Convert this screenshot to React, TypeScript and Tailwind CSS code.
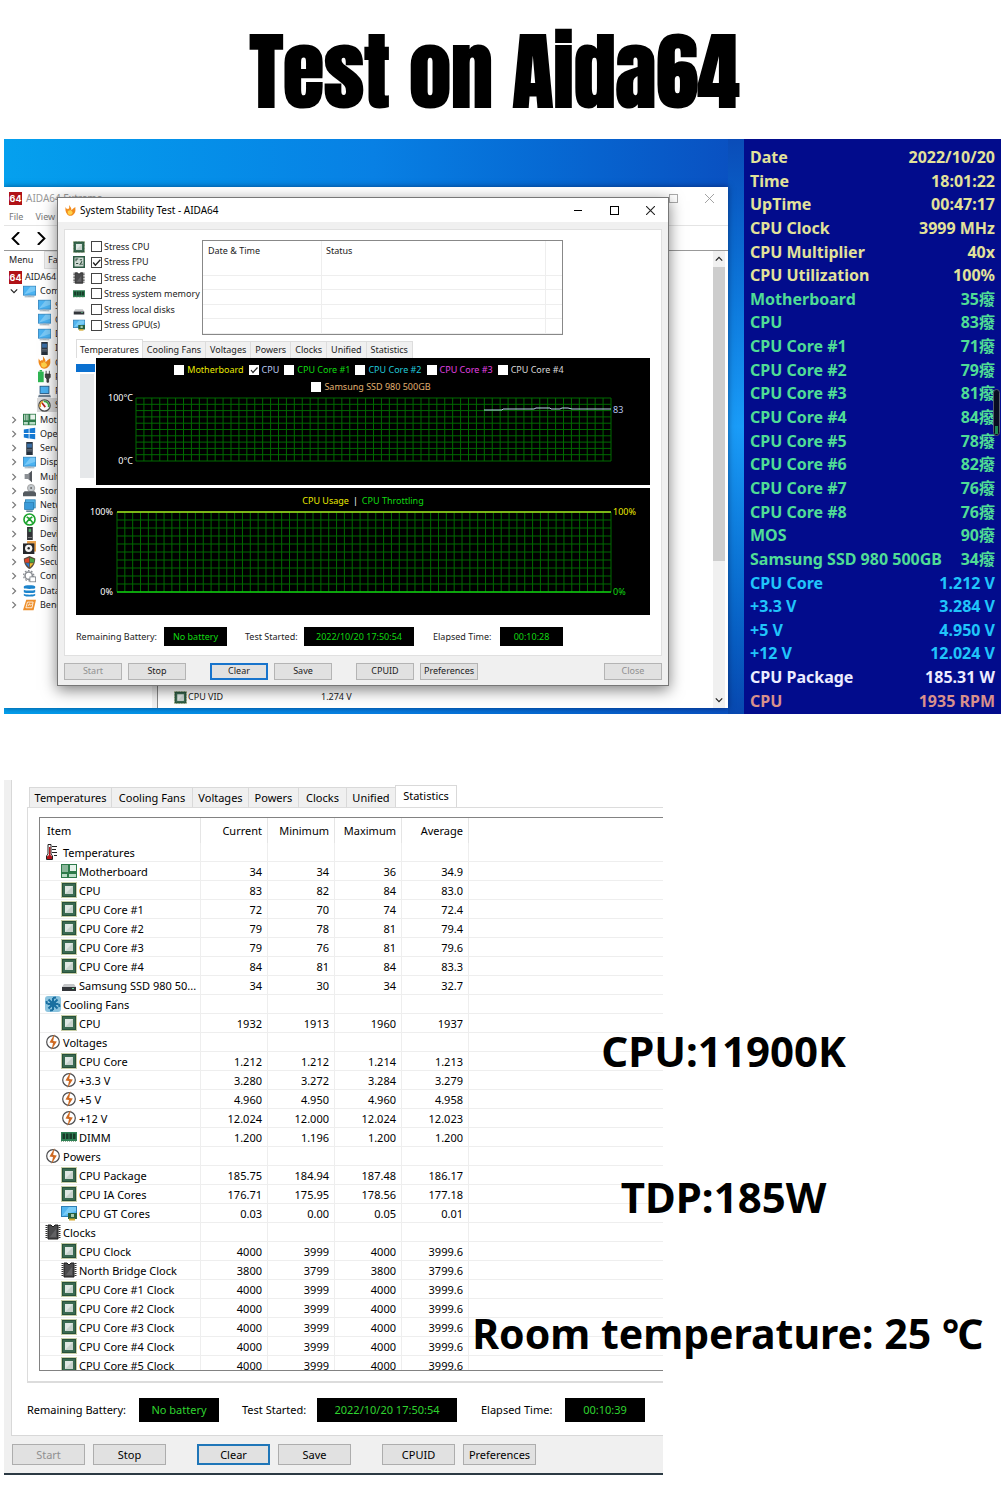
import React from "react";

type IconName =
  | "chip" | "fpu" | "ic" | "ram" | "disk" | "gpu" | "monitor" | "server" | "flame" | "power"
  | "laptop" | "gauge" | "board" | "windows" | "speaker" | "storage" | "network"
  | "directx" | "device" | "software" | "shield" | "config" | "database" | "bench" | "fan"
  | "bolt" | "thermo";

const drawings: Record<IconName, React.ReactNode> = {
  chip: (
    <>
      <rect x="0.5" y="0.5" width="15" height="15" fill="none" stroke="#8a9a4a" strokeWidth="1" strokeDasharray="1 1" />
      <rect x="1" y="1" width="14" height="14" fill="#3a6a50" />
      <rect x="1.500" y="1.500" width="13" height="13" fill="none" stroke="#27503b" />
      <rect x="4" y="4" width="8" height="8" fill="#dfe7e3" />
      <path d="M4 12L12 4V12Z" fill="#c8d3cd" />
    </>
  ),
  fpu: (
    <>
      <rect x="1" y="1" width="14" height="14" fill="#cfdad3" stroke="#2c5a43" strokeWidth="2" />
      <path d="M4 7V4H7M9 5H12M4 10H7M9 12L12 7M11 11H13" stroke="#2c4a3a" strokeWidth="1.4" fill="none" />
    </>
  ),
  ic: (
    <>
      <path d="M3 1H6L8 3L10 1H13V15H3Z" fill="#4a4a4c" stroke="#1c1c1c" />
      <path d="M1.500 1V15M14.500 1V15" stroke="#333" strokeWidth="2" strokeDasharray="1 1" />
      <path d="M5 13L11 5V13Z" fill="#626264" />
    </>
  ),
  ram: (
    <>
      <rect x="0" y="3" width="16" height="9" fill="#2f8054" />
      <path d="M1.500 4.500H4V10H1.500ZM5 4.500H7.500V10H5ZM8.500 4.500H11V10H8.500ZM12 4.500H14.500V10H12Z" fill="#173b29" />
      <path d="M0 12.500H16" stroke="#9db39e" strokeDasharray="1 1" />
    </>
  ),
  disk: (
    <>
      <path d="M3 7H13L15 10H1Z" fill="#c5c7c9" />
      <rect x="1" y="10" width="14" height="4" fill="#33363a" />
      <rect x="11" y="11" width="2" height="1" fill="#6fdd9a" />
    </>
  ),
  gpu: (
    <>
      <rect x="0.5" y="1.5" width="15" height="10" fill="#52b5ef" stroke="#2e7fb5" />
      <path d="M1 11L8 2H15V6Z" fill="#7accf6" />
      <rect x="7" y="8" width="9" height="6" fill="#27603f" />
      <rect x="10" y="9" width="3" height="3" fill="#a6c9ad" />
      <path d="M8 14.5H14" stroke="#d4a92d" strokeWidth="2" />
    </>
  ),
  monitor: (
    <>
      <rect x="0.5" y="1.5" width="15" height="11" fill="#4bb3f2" stroke="#3183bd" />
      <path d="M1 12L9 2H15V7Z" fill="#79c9f7" />
      <path d="M6 13H10V14H6Z" fill="#a4b2bc" />
      <path d="M2 14.5H14" stroke="#8497a5" />
    </>
  ),
  server: (
    <>
      <rect x="4" y="0" width="8" height="16" fill="#26303c" />
      <rect x="5" y="2" width="6" height="5" fill="#3a6ea5" />
      <path d="M5 9H11M5 11H11" stroke="#77838f" />
    </>
  ),
  flame: (
    <>
      <path d="M1 3C2 6 4 7 4 5C7 7 6 2 6 0C8 3 10 5 9 8L12 5L15 3C15 7 16 10 13 13C10 17 4 16 3 13C1 10 0 7 1 3Z" fill="#f28a1c" />
      <path d="M4 8C6 9 7 8 7 6C9 9 12 9 11 12C9 15 5 15 4 12Z" fill="#ffd24a" />
    </>
  ),
  power: (
    <>
      <rect x="0" y="2" width="7" height="13" fill="#2fb552" />
      <rect x="2" y="0" width="3" height="2" fill="#2fb552" />
      <path d="M10 1V5M14 1V5M9 5H15V9L13 11V15H11V11L9 9Z" stroke="#333" fill="#444" />
    </>
  ),
  laptop: (
    <>
      <rect x="2.5" y="1.5" width="11" height="9" fill="#4bb0f0" stroke="#1e4e78" />
      <path d="M1 12H15L16 15H0Z" fill="#6b7d8e" />
    </>
  ),
  gauge: (
    <>
      <circle cx="8" cy="8" r="7" fill="#fff" stroke="#4b4b4b" strokeWidth="1.5" />
      <path d="M3 10A5.500 5.500 0 0 1 6 3" stroke="#e0a021" strokeWidth="2" fill="none" />
      <path d="M7 3A5.500 5.500 0 0 1 13 10" stroke="#3bab45" strokeWidth="2" fill="none" />
      <path d="M5 5L9 10" stroke="#b32020" strokeWidth="2" />
    </>
  ),
  board: (
    <>
      <rect x="0" y="1" width="16" height="14" fill="#2d7a49" />
      <path d="M2 2V9M4 2V9M6 2V9" stroke="#e6f2ea" />
      <rect x="9" y="2" width="6" height="6" fill="#e6f2ea" />
      <path d="M1 11H6V14H1ZM8 11H15V14H8Z" fill="#b9dbc5" />
    </>
  ),
  windows: <path d="M1 3L7 2V7.500H1ZM8 1.800L15 1V7.500H8ZM1 8.500H7V14L1 13ZM8 8.500H15V15L8 14.200Z" fill="#1579d3" />,
  speaker: (
    <>
      <path d="M2 5H6L11 1V15L6 11H2Z" fill="#8b8f94" />
      <path d="M8 4L11 1V15L8 12Z" fill="#50545a" />
    </>
  ),
  storage: (
    <>
      <circle cx="10" cy="5" r="4.500" fill="#c3c8cc" stroke="#999" />
      <circle cx="10" cy="5" r="1.200" fill="#666" />
      <path d="M2 9H14L16 11V15H0V11Z" fill="#555b60" />
    </>
  ),
  network: (
    <>
      <rect x="3" y="1" width="12" height="10" fill="#55b8ee" stroke="#2c7cae" />
      <rect x="2" y="4" width="11" height="9" fill="#3a9ad9" stroke="#2c7cae" />
      <path d="M4 15H12" stroke="#6a8496" strokeWidth="2" />
    </>
  ),
  directx: (
    <>
      <circle cx="8" cy="8" r="6.800" fill="#fff" stroke="#1aa32c" strokeWidth="2" />
      <path d="M4 12L8 7L12 12M4.500 5L8 7L11.500 5" stroke="#1aa32c" strokeWidth="2" fill="none" />
    </>
  ),
  device: (
    <>
      <rect x="5" y="0" width="7" height="16" fill="#303236" />
      <rect x="7" y="2" width="3" height="4" fill="#4fa968" />
      <path d="M6 13H11" stroke="#999" />
    </>
  ),
  software: (
    <>
      <path d="M5 0H16V13H5Z" fill="#e8a14c" />
      <rect x="0" y="3" width="14" height="13" fill="#26282b" />
      <circle cx="7" cy="9" r="4.500" fill="#f2f2f2" />
      <circle cx="7" cy="9" r="1.500" fill="#26282b" />
    </>
  ),
  shield: (
    <>
      <path d="M8 0L15 3C15 10 12 14 8 16C4 14 1 10 1 3Z" fill="#5b4a3a" />
      <path d="M7.500 2V8H2.500L2 4Z" fill="#d8452c" />
      <path d="M8.500 2V8H13.500L14 4Z" fill="#46a445" />
      <path d="M7.500 9V14L3 9Z" fill="#2f78cf" />
      <path d="M8.500 9V14L13 9Z" fill="#f0bd2e" />
    </>
  ),
  config: (
    <>
      <circle cx="7" cy="7" r="4.500" fill="#fff" stroke="#8b8f94" strokeWidth="2" />
      <circle cx="7" cy="7" r="6.300" fill="none" stroke="#8b8f94" strokeWidth="1.500" strokeDasharray="2 2" />
      <rect x="8.500" y="8.500" width="7" height="6" fill="#fff" stroke="#7d8288" />
    </>
  ),
  database: (
    <path d="M1 3C1 1 15 1 15 3V5C15 6.500 1 6.500 1 5ZM1 7C4 8.500 12 8.500 15 7V10C12 11.500 4 11.500 1 10ZM1 12C4 13.500 12 13.500 15 12V14C12 16 4 16 1 14Z" fill="#1c84cc" />
  ),
  bench: (
    <>
      <path d="M4 2H16L13 15H0Z" fill="#ee8f2b" />
      <path d="M5.500 5H12.500L11 12H3.500Z" fill="none" stroke="#fff" />
      <path d="M6 10L8 7L9 9L11 7" stroke="#fff" fill="none" />
    </>
  ),
  fan: (
    <>
      <rect x="0" y="0" width="16" height="16" rx="3" fill="#8cc4df" />
      <path d="M8 2V14M2.500 8H13.500M3.500 3.500L12.500 12.500M12.500 3.500L3.500 12.500" stroke="#1a6fa0" strokeWidth="2" />
      <path d="M8 2L11 1.500M14 8L14.500 11M8 14L5 14.500M2 8L1.500 5" stroke="#1a6fa0" strokeWidth="2" />
      <circle cx="8" cy="8" r="3" fill="#1a6fa0" />
    </>
  ),
  bolt: (
    <>
      <circle cx="8" cy="8" r="6.300" fill="#fff" stroke="#4d4d4f" strokeWidth="1.200" />
      <path d="M9.500 0L4.500 8.500L8 9L6.500 16L11.800 7.500L8.200 7Z" fill="#cf6a22" />
    </>
  ),
  thermo: (
    <>
      <path d="M3 0.500H6V10L7.500 12V15.500H1.500V12L3 10Z" fill="#fff" stroke="#222" />
      <path d="M4 3H5.500V11L7 12.500V15H2V12.500L4 11Z" fill="#b3161b" />
      <path d="M7 2.500H12M7 5.500H11M7 8.500H12M9 11.500H12" stroke="#222" />
    </>
  ),
};

function Icon({ name, className }: { name: IconName; className: string }) {
  return (
    <svg viewBox="0 0 16 16" className={className} aria-hidden="true">
      {drawings[name]}
    </svg>
  );
}

function Logo() {
  return (
    <span className="flex h-[13px] w-[13px] shrink-0 items-center justify-center bg-[#b01217] font-['Inter',sans-serif] text-[9px] font-bold leading-none text-white">
      64
    </span>
  );
}

function Check({ checked, dark }: { checked?: boolean; dark?: boolean }) {
  return (
    <span className="relative flex shrink-0">
      <input
        type="checkbox"
        defaultChecked={checked}
        className={
          dark
            ? "peer h-[10px] w-[10px] appearance-none border border-white bg-white"
            : "peer h-[11px] w-[11px] appearance-none border border-[#444] bg-white"
        }
      />
      <svg viewBox="0 0 10 10" className="pointer-events-none absolute inset-0 hidden h-full w-full peer-checked:block">
        <path d="M2 5L4 7.500L8.500 2.500" fill="none" stroke="#222" strokeWidth="1.200" />
      </svg>
    </span>
  );
}

/* ---------- Hardware tree in the main window ---------- */

const subItems: { icon: IconName; label: string }[] = [
  { icon: "monitor", label: "Summary" },
  { icon: "monitor", label: "Computer" },
  { icon: "monitor", label: "DMI" },
  { icon: "server", label: "IPMI" },
  { icon: "flame", label: "Clock" },
  { icon: "power", label: "Power" },
  { icon: "laptop", label: "PC" },
  { icon: "gauge", label: "Sensor" },
];

const rootItems: { icon: IconName; label: string }[] = [
  { icon: "board", label: "Motherboard" },
  { icon: "windows", label: "Operating" },
  { icon: "server", label: "Server" },
  { icon: "monitor", label: "Display" },
  { icon: "speaker", label: "Multimedia" },
  { icon: "storage", label: "Storage" },
  { icon: "network", label: "Network" },
  { icon: "directx", label: "DirectX" },
  { icon: "device", label: "Devices" },
  { icon: "software", label: "Software" },
  { icon: "shield", label: "Security" },
  { icon: "config", label: "Config" },
  { icon: "database", label: "Database" },
  { icon: "bench", label: "Benchmark" },
];

function Chevron({ d, className }: { d: string; className: string }) {
  return (
    <svg viewBox="0 0 10 10" className={className} aria-hidden="true">
      <path d={d} fill="none" stroke="currentColor" strokeWidth="1.500" />
    </svg>
  );
}

function MainWindow() {
  return (
    <div className="absolute bottom-[6px] left-0 right-4 top-12 flex flex-col overflow-hidden bg-white text-[9px] leading-3 text-[#222] shadow-[0_0_6px_rgba(0,0,40,0.5)]">
      <div className="flex h-[22px] shrink-0 items-center pl-[5px] text-[10px] text-[#999]">
        <Logo />
        <span className="ml-1">AIDA64 Extreme</span>
        <span className="ml-auto mr-[27px] h-[9px] w-[9px] border border-[#aaa]" />
        <svg viewBox="0 0 10 10" className="mr-[14px] h-[9px] w-[9px]">
          <path d="M0 0L10 10M10 0L0 10" stroke="#999" />
        </svg>
      </div>
      <div className="flex h-[17px] shrink-0 items-center gap-3 border-b border-[#e4e4e4] pl-[5px] text-[#777]">
        <span>File</span>
        <span>View</span>
      </div>
      <div className="flex h-[25px] shrink-0 items-center gap-[11px] border-b border-[#999] pl-[6px] text-black">
        <Chevron d="M7 0L2 5L7 10" className="h-[13px] w-[13px]" />
        <Chevron d="M3 0L8 5L3 10" className="h-[13px] w-[13px]" />
      </div>
      <div className="flex min-h-0 flex-1">
        <div className="w-[148px] shrink-0">
          <div className="flex h-[18px] items-center">
            <span className="w-10 pl-[5px]">Menu</span>
            <span className="flex h-full flex-1 items-center border border-[#ddd] bg-[#f0f0f0] pl-[3px]">Favorites</span>
          </div>
          <div className="flex h-[343px] flex-col justify-between pt-px">
            <div className="flex h-[14px] items-center pl-[5px]">
              <Logo />
              <span className="ml-[3px]">AIDA64</span>
            </div>
            <div className="flex h-[14px] items-center pl-[6px]">
              <Chevron d="M1 3L5 7L9 3" className="h-2 w-2" />
              <Icon name="monitor" className="ml-[5px] h-[13px] w-[13px]" />
              <span className="ml-1">Computer</span>
            </div>
            {subItems.map((item) => (
              <div
                key={item.label}
                className={`ml-[33px] flex h-[14px] items-center pl-px ${item.label === "Sensor" ? "bg-[#d9d9d9]" : ""}`}
              >
                <Icon name={item.icon} className="h-[13px] w-[13px] shrink-0" />
                <span className="ml-1">{item.label}</span>
              </div>
            ))}
            {rootItems.map((item) => (
              <div key={item.label} className="flex h-[14px] items-center pl-[6px]">
                <Chevron d="M3 1L7 5L3 9" className="h-2 w-2 text-[#777]" />
                <Icon name={item.icon} className="ml-[5px] h-[13px] w-[13px]" />
                <span className="ml-1">{item.label}</span>
              </div>
            ))}
          </div>
        </div>
        <div className="w-[6px] shrink-0 border-r border-[#888] bg-[#f0f0f0]" />
        <div className="flex flex-1 flex-col justify-end pb-1 pl-4">
          <div className="flex h-[14px] items-center">
            <Icon name="chip" className="h-[13px] w-[13px]" />
            <span className="ml-px w-[133px]">CPU VID</span>
            <span>1.274 V</span>
          </div>
        </div>
        <div className="mr-[3px] flex w-3 shrink-0 flex-col items-center bg-[#f0f0f0]">
          <Chevron d="M1 7L5 3L9 7" className="my-1 h-2 w-2" />
          <div className="h-[294px] w-full bg-[#cdcdcd]" />
          <Chevron d="M1 3L5 7L9 3" className="mb-1 mt-auto h-2 w-2" />
        </div>
      </div>
    </div>
  );
}

/* ---------- Stability test dialog ---------- */

const stressOptions: { icon: IconName; label: string; on?: boolean }[] = [
  { icon: "chip", label: "Stress CPU" },
  { icon: "fpu", label: "Stress FPU", on: true },
  { icon: "ic", label: "Stress cache" },
  { icon: "ram", label: "Stress system memory" },
  { icon: "disk", label: "Stress local disks" },
  { icon: "gpu", label: "Stress GPU(s)" },
];

const tabs = ["Temperatures", "Cooling Fans", "Voltages", "Powers", "Clocks", "Unified", "Statistics"];

const legend: { label: string; color: string; on?: boolean }[] = [
  { label: "Motherboard", color: "text-[#e8e800]" },
  { label: "CPU", color: "text-[#b8c8f0]", on: true },
  { label: "CPU Core #1", color: "text-[#10d810]" },
  { label: "CPU Core #2", color: "text-[#20c8d8]" },
  { label: "CPU Core #3", color: "text-[#e040e0]" },
  { label: "CPU Core #4", color: "text-[#d8d8d8]" },
];

function GridLines({ cols, width, height, children }: { cols: number; width: number; height: number; children?: React.ReactNode }) {
  const v = Array.from({ length: cols + 1 }, (_, i) => (i * width) / cols);
  const h = Array.from({ length: 11 }, (_, i) => (i * height) / 10);
  return (
    <svg viewBox={`0 0 ${width} ${height}`} preserveAspectRatio="none" className="h-full w-full overflow-visible">
      <g stroke="#006a00" strokeWidth="1">
        {v.map((x) => (
          <line key={x} x1={x} x2={x} y1="0" y2={height} />
        ))}
        {h.map((y) => (
          <line key={y} x1="0" x2={width} y1={y} y2={y} />
        ))}
      </g>
      {children}
    </svg>
  );
}

const smallButton =
  "flex h-[17px] w-[58px] items-center justify-center border border-[#b4b4b4] bg-[#e1e1e1] text-[9px] leading-3";

function StabilityDialog() {
  return (
    <div
      role="dialog"
      aria-label="System Stability Test"
      className="absolute left-[53px] top-[58px] flex h-[489px] w-[612px] flex-col border border-[#777] bg-[#f0f0f0] text-[9px] leading-3 text-[#222] shadow-[0_4px_14px_rgba(0,0,0,0.5)]"
    >
      <div className="flex h-6 shrink-0 items-center bg-white pl-[7px] text-[10px] text-black">
        <Icon name="flame" className="h-[11px] w-[11px]" />
        <span className="ml-1">System Stability Test - AIDA64</span>
        <button aria-label="Minimize" className="ml-auto flex h-full w-9 items-center justify-center">
          <span className="h-px w-2 bg-black" />
        </button>
        <button aria-label="Maximize" className="flex h-full w-9 items-center justify-center">
          <span className="h-[9px] w-[9px] border border-black" />
        </button>
        <button aria-label="Close window" className="flex h-full w-9 items-center justify-center">
          <svg viewBox="0 0 10 10" className="h-[9px] w-[9px]">
            <path d="M0 0L10 10M10 0L0 10" stroke="#222" strokeWidth="1.200" />
          </svg>
        </button>
      </div>

      <div className="mx-[6px] mt-[7px] flex h-[427px] shrink-0 flex-col border border-[#e0e0e0] bg-white pl-[11px] pr-[11px] pt-[9px]">
        <div className="flex">
          <div className="-ml-[3px] flex h-[94px] w-[129px] shrink-0 flex-col justify-between">
            {stressOptions.map((o) => (
              <label key={o.label} className="flex h-[15px] items-center whitespace-nowrap">
                <Icon name={o.icon} className="mr-[6px] h-3 w-3 shrink-0" />
                <Check checked={o.on} />
                <span className="ml-[2px]">{o.label}</span>
              </label>
            ))}
          </div>
          <div className="mt-px h-[95px] w-[361px] border border-[#888]">
            <table className="h-full w-full table-fixed border-separate border-spacing-0 text-left">
              <colgroup>
                <col className="w-[119px]" />
                <col />
                <col className="w-4" />
              </colgroup>
              <thead>
                <tr className="h-[20px]">
                  <th className="border-r border-[#eee] pl-[5px] font-normal">Date &amp; Time</th>
                  <th className="border-r border-[#eee] pl-1 font-normal">Status</th>
                  <th />
                </tr>
              </thead>
              <tbody>
                {[0, 1, 2, 3, 4].map((r) => (
                  <tr key={r}>
                    <td className="border-b border-r border-[#eee]" />
                    <td className="border-b border-r border-[#eee]" />
                    <td className="border-b border-[#eee]" />
                  </tr>
                ))}
              </tbody>
            </table>
          </div>
        </div>

        <div role="tablist" className="mt-[4px] flex h-[19px] items-end">
          {tabs.map((t, i) => (
            <button
              key={t}
              role="tab"
              aria-selected={i === 0}
              className={
                i === 0
                  ? "h-[19px] whitespace-nowrap border border-b-0 border-[#ddd] bg-white px-[3px] leading-[15px]"
                  : "h-[17px] whitespace-nowrap border border-b-0 border-l-0 border-[#ddd] bg-[#f0f0f0] px-[4px] leading-[14px]"
              }
            >
              {t}
            </button>
          ))}
        </div>

        <div className="flex h-[127px] shrink-0">
          <div className="w-5 shrink-0">
            <div className="mt-[6px] h-2 w-[19px] bg-[#0a70d0]" />
            <div className="ml-1 mt-[2px] h-[104px] w-[14px] bg-[#e6e8ea]" />
          </div>
          <div className="flex flex-1 flex-col bg-black text-white">
            <div className="mt-[6px] flex h-3 items-center justify-center gap-[5px] pr-2">
              {legend.map((l) => (
                <label key={l.label} className="flex items-center gap-[3px] whitespace-nowrap">
                  <Check dark checked={l.on} />
                  <span className={l.color}>{l.label}</span>
                </label>
              ))}
            </div>
            <div className="mt-[5px] flex h-3 items-center justify-center pr-1">
              <label className="flex items-center gap-[3px]">
                <Check dark />
                <span className="text-[#e0b070]">Samsung SSD 980 500GB</span>
              </label>
            </div>
            <div className="mt-[5px] flex h-[63px]">
              <div className="-my-[6px] flex w-[40px] flex-col justify-between pr-[3px] text-right">
                <span>100°C</span>
                <span>0°C</span>
              </div>
              <div className="flex-1">
                <GridLines cols={60} width={475} height={63}>
                  <path d="M348 12H366L367 11H398L400 10H414L415 11H424L426 10H432L436 11H475" fill="none" stroke="#b8d4e8" />
                </GridLines>
              </div>
              <span className="w-[39px] pl-[2px] pt-[6px] text-[#b8c8f0]">83</span>
            </div>
          </div>
        </div>

        <div className="mt-[3px] flex h-[127px] shrink-0 flex-col bg-black text-white">
          <div className="mt-[7px] flex h-3 items-center justify-center gap-1">
            <span className="text-[#e8e800]">CPU Usage</span>
            <span>|</span>
            <span className="text-[#10d810]">CPU Throttling</span>
          </div>
          <div className="mt-[5px] flex h-[80px]">
            <div className="-my-[6px] flex w-[41px] flex-col justify-between pr-[4px] text-right">
              <span>100%</span>
              <span>0%</span>
            </div>
            <div className="flex-1">
              <GridLines cols={63} width={494} height={80}>
                <path d="M0 0H494" stroke="#a8e020" strokeWidth="1.500" />
                <path d="M0 80H494" stroke="#10c810" strokeWidth="1.500" />
              </GridLines>
            </div>
            <div className="-my-[6px] flex w-[39px] flex-col justify-between pl-[2px]">
              <span className="text-[#e8e800]">100%</span>
              <span className="text-[#10d810]">0%</span>
            </div>
          </div>
        </div>

        <div className="mt-3 flex h-[19px] items-center whitespace-nowrap">
          <span className="w-[88px]">Remaining Battery:</span>
          <span className="flex h-full w-[63px] items-center justify-center bg-black text-[#10d810]">No battery</span>
          <span className="ml-[18px] w-[59px]">Test Started:</span>
          <span className="flex h-full w-[110px] items-center justify-center bg-black text-[#10d810]">2022/10/20 17:50:54</span>
          <span className="ml-[19px] w-[67px]">Elapsed Time:</span>
          <span className="flex h-full w-[63px] items-center justify-center bg-black text-[#10d810]">00:10:28</span>
        </div>
      </div>

      <div className="mx-[6px] flex flex-1 items-center gap-[6px] pt-px">
        <button disabled className={`${smallButton} bg-[#cccccc] text-[#909090]`}>Start</button>
        <button className={smallButton}>Stop</button>
        <button className="ml-[18px] flex h-[17px] w-[58px] items-center justify-center border-2 border-[#1874cc] bg-[#e1e1e1] text-[9px] leading-3">Clear</button>
        <button className={smallButton}>Save</button>
        <button className={`${smallButton} ml-[18px]`}>CPUID</button>
        <button className={smallButton}>Preferences</button>
        <button disabled className={`${smallButton} ml-auto bg-[#cccccc] text-[#909090]`}>Close</button>
      </div>
    </div>
  );
}

/* ---------- Sensor panel ---------- */

const yellow = "text-[#e2e29a]";
const green = "text-[#4fdc96]";
const cyan = "text-[#20c4fa]";

const sensors: [string, string, string][] = [
  ["Date", "2022/10/20", yellow],
  ["Time", "18:01:22", yellow],
  ["UpTime", "00:47:17", yellow],
  ["CPU Clock", "3999 MHz", yellow],
  ["CPU Multiplier", "40x", yellow],
  ["CPU Utilization", "100%", yellow],
  ["Motherboard", "35癈", green],
  ["CPU", "83癈", green],
  ["CPU Core #1", "71癈", green],
  ["CPU Core #2", "79癈", green],
  ["CPU Core #3", "81癈", green],
  ["CPU Core #4", "84癈", green],
  ["CPU Core #5", "78癈", green],
  ["CPU Core #6", "82癈", green],
  ["CPU Core #7", "76癈", green],
  ["CPU Core #8", "76癈", green],
  ["MOS", "90癈", green],
  ["Samsung SSD 980 500GB", "34癈", green],
  ["CPU Core", "1.212 V", cyan],
  ["+3.3 V", "3.284 V", cyan],
  ["+5 V", "4.950 V", cyan],
  ["+12 V", "12.024 V", cyan],
  ["CPU Package", "185.31 W", "text-[#ececff]"],
  ["CPU", "1935 RPM", "text-[#d8908c]"],
];

function SensorPanel() {
  return (
    <aside className="relative flex w-[257px] shrink-0 flex-col justify-between bg-[#020c8c] pb-px pl-[6px] pr-[6px] pt-[7px] text-[16px] font-bold leading-[23px]">
      {sensors.map(([label, value, color], i) => (
        <div key={i} className={`flex h-[23px] justify-between whitespace-nowrap ${color}`}>
          <span>{label}</span>
          <span>{value}</span>
        </div>
      ))}
      <span className="absolute right-px top-[250px] flex h-[47px] w-[7px] items-end justify-center rounded-sm border border-[#555a70] bg-[#080c20] pb-px">
        <span className="h-2 w-[3px] bg-[#1c8a50]" />
      </span>
    </aside>
  );
}

/* ---------- Statistics window ---------- */

type Row = { icon: IconName; label: string; values?: string[] };

const rows: Row[] = [
  { icon: "thermo", label: "Temperatures" },
  { icon: "board", label: "Motherboard", values: ["34", "34", "36", "34.9"] },
  { icon: "chip", label: "CPU", values: ["83", "82", "84", "83.0"] },
  { icon: "chip", label: "CPU Core #1", values: ["72", "70", "74", "72.4"] },
  { icon: "chip", label: "CPU Core #2", values: ["79", "78", "81", "79.4"] },
  { icon: "chip", label: "CPU Core #3", values: ["79", "76", "81", "79.6"] },
  { icon: "chip", label: "CPU Core #4", values: ["84", "81", "84", "83.3"] },
  { icon: "disk", label: "Samsung SSD 980 50...", values: ["34", "30", "34", "32.7"] },
  { icon: "fan", label: "Cooling Fans" },
  { icon: "chip", label: "CPU", values: ["1932", "1913", "1960", "1937"] },
  { icon: "bolt", label: "Voltages" },
  { icon: "chip", label: "CPU Core", values: ["1.212", "1.212", "1.214", "1.213"] },
  { icon: "bolt", label: "+3.3 V", values: ["3.280", "3.272", "3.284", "3.279"] },
  { icon: "bolt", label: "+5 V", values: ["4.960", "4.950", "4.960", "4.958"] },
  { icon: "bolt", label: "+12 V", values: ["12.024", "12.000", "12.024", "12.023"] },
  { icon: "ram", label: "DIMM", values: ["1.200", "1.196", "1.200", "1.200"] },
  { icon: "bolt", label: "Powers" },
  { icon: "chip", label: "CPU Package", values: ["185.75", "184.94", "187.48", "186.17"] },
  { icon: "chip", label: "CPU IA Cores", values: ["176.71", "175.95", "178.56", "177.18"] },
  { icon: "gpu", label: "CPU GT Cores", values: ["0.03", "0.00", "0.05", "0.01"] },
  { icon: "ic", label: "Clocks" },
  { icon: "chip", label: "CPU Clock", values: ["4000", "3999", "4000", "3999.6"] },
  { icon: "ic", label: "North Bridge Clock", values: ["3800", "3799", "3800", "3799.6"] },
  { icon: "chip", label: "CPU Core #1 Clock", values: ["4000", "3999", "4000", "3999.6"] },
  { icon: "chip", label: "CPU Core #2 Clock", values: ["4000", "3999", "4000", "3999.6"] },
  { icon: "chip", label: "CPU Core #3 Clock", values: ["4000", "3999", "4000", "3999.6"] },
  { icon: "chip", label: "CPU Core #4 Clock", values: ["4000", "3999", "4000", "3999.6"] },
  { icon: "chip", label: "CPU Core #5 Clock", values: ["4000", "3999", "4000", "3999.6"] },
];

const tabWidths = ["w-[82px]", "w-[81px]", "w-[56px]", "w-[50px]", "w-[48px]", "w-[49px]", "w-[62px]"];

const button =
  "flex h-[21px] w-[73px] items-center justify-center border border-[#adadad] bg-[#e1e1e1] text-[11px] leading-4";

function StatisticsWindow() {
  return (
    <div className="ml-1 flex w-[659px] flex-col border-b-2 border-[#2c3a44] bg-[#f0f0f0] text-[11px] leading-4 text-black">
      <div className="ml-[7px] border-b border-l border-[#d8d8d8] bg-white pb-[13px] pl-[15px] pt-[5px]">
        <div role="tablist" className="ml-[2px] flex h-[22px] items-end">
          {tabs.map((t, i) => (
            <button
              key={t}
              role="tab"
              aria-selected={i === 6}
              className={`${tabWidths[i]} whitespace-nowrap border border-b-0 border-[#d9d9d9] text-center ${
                i === 6 ? "h-[22px] bg-white pb-px" : "h-[20px] border-r-0 bg-[#f0f0f0]"
              }`}
            >
              {t}
            </button>
          ))}
        </div>
        <div className="border-b-2 border-l border-t border-[#dcdcdc] pb-[10px] pl-[11px] pt-[9px]">
          <div className="h-[554px] overflow-hidden border border-r-0 border-[#828282]">
            <table className="w-full table-fixed border-separate border-spacing-0">
              <colgroup>
                <col className="w-[161px]" />
                <col className="w-[67px]" />
                <col className="w-[67px]" />
                <col className="w-[67px]" />
                <col className="w-[67px]" />
                <col />
              </colgroup>
              <thead>
                <tr className="h-[25px]">
                  <th className="border-r border-[#e5e5e5] pl-[7px] text-left font-normal">Item</th>
                  {["Current", "Minimum", "Maximum", "Average"].map((h) => (
                    <th key={h} className="border-r border-[#e5e5e5] pr-[5px] text-right font-normal">
                      {h}
                    </th>
                  ))}
                  <th />
                </tr>
              </thead>
              <tbody>
                {rows.map((r, i) => (
                  <tr key={i} className="h-[19px]">
                    <td className="border-b border-r border-[#eee] p-0">
                      <div className={`flex h-[18px] items-center whitespace-nowrap ${r.values ? "pl-[21px]" : "pl-[5px]"}`}>
                        <Icon name={r.icon} className="h-4 w-4 shrink-0" />
                        <span className="ml-[2px] pt-[2px]">{r.label}</span>
                      </div>
                    </td>
                    {[0, 1, 2, 3].map((c) => (
                      <td key={c} className="border-b border-r border-[#eee] p-0 pr-[5px] pt-[2px] text-right">
                        {r.values ? r.values[c] : ""}
                      </td>
                    ))}
                    <td className="border-b border-[#eee] p-0" />
                  </tr>
                ))}
              </tbody>
            </table>
          </div>
        </div>
        <div className="mt-[15px] flex h-6 items-center whitespace-nowrap">
          <span className="w-[112px]">Remaining Battery:</span>
          <span className="flex h-full w-20 items-center justify-center bg-black text-[#2fd42f]">No battery</span>
          <span className="ml-[23px] w-[75px]">Test Started:</span>
          <span className="flex h-full w-[140px] items-center justify-center bg-black text-[#2fd42f]">2022/10/20 17:50:54</span>
          <span className="ml-6 w-[84px]">Elapsed Time:</span>
          <span className="flex h-full w-20 items-center justify-center bg-black text-[#2fd42f]">00:10:39</span>
        </div>
      </div>
      <div className="flex h-[37px] items-center gap-2 pl-2">
        <button disabled className={`${button} bg-[#cccccc] text-[#909090]`}>Start</button>
        <button className={button}>Stop</button>
        <button className="ml-[23px] flex h-[21px] w-[73px] items-center justify-center border-2 border-[#1f76b8] bg-[#e1e1e1] text-[11px] leading-4">Clear</button>
        <button className={button}>Save</button>
        <button className={`${button} ml-[23px]`}>CPUID</button>
        <button className={button}>Preferences</button>
      </div>
    </div>
  );
}

export default function App() {
  return (
    <main className="w-full bg-white pb-6 font-['Noto_Sans','Noto_Sans_CJK_SC',sans-serif]">
      <h1 className="flex h-[139px] items-center justify-center pr-3 pt-1 font-['Impact','Anton','Roboto',sans-serif] text-[84px] font-normal leading-none text-black [-webkit-text-stroke:2px_black]">
        Test on Aida64
      </h1>

      <section className="ml-1 flex min-h-[575px]">
        <div className="relative flex-1 overflow-hidden bg-linear-to-r from-[#05a0ee] via-[#0880e4] to-[#0a4fc0]">
          <div className="absolute inset-y-0 right-0 w-4 bg-linear-to-b from-[#0a4cb8] via-[#1a9cf8] to-[#0848b0]" />
          <MainWindow />
          <StabilityDialog />
        </div>
        <SensorPanel />
      </section>

      <section className="relative mt-[66px]">
        <StatisticsWindow />
        <div className="absolute right-[18px] top-[241px] flex flex-col items-center whitespace-nowrap text-[42px] font-bold leading-[60px] text-black">
          <p className="pr-2">CPU:11900K</p>
          <p className="mt-[86px] pr-2">TDP:185W</p>
          <p className="mt-[76px] text-[41px]">Room temperature: 25 ℃</p>
        </div>
      </section>
    </main>
  );
}
